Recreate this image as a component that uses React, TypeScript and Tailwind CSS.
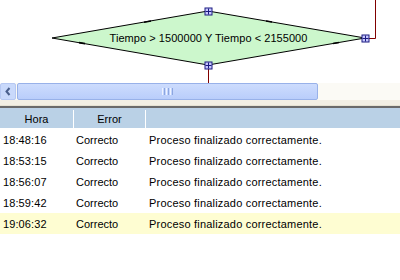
import React from "react";

const rows = [
  { hora: "18:48:16", error: "Correcto", msg: "Proceso finalizado correctamente." },
  { hora: "18:53:15", error: "Correcto", msg: "Proceso finalizado correctamente." },
  { hora: "18:56:07", error: "Correcto", msg: "Proceso finalizado correctamente." },
  { hora: "18:59:42", error: "Correcto", msg: "Proceso finalizado correctamente." },
  { hora: "19:06:32", error: "Correcto", msg: "Proceso finalizado correctamente." },
];

const Handle = ({ x, y }: { x: number; y: number }) => (
  <g>
    <rect x={x - 3.5} y={y - 3.5} width={7} height={7} fill="#c8c8ff" stroke="#1a1a80" strokeWidth={1} />
    <line x1={x} y1={y - 3} x2={x} y2={y + 3} stroke="#1a1a80" />
    <line x1={x - 3} y1={y} x2={x + 3} y2={y} stroke="#1a1a80" />
  </g>
);

const Diagram = () => (
  <div className="relative h-[83px] w-full bg-white">
    <svg width="400" height="83" className="absolute left-0 top-0">
      <polygon points="52,38 208,11 365,38 208,65" fill="#ccf7cc" stroke="#000" strokeWidth={1} />
      <line x1="144" y1="22.2" x2="151" y2="21" stroke="#000" strokeWidth={1.6} />
      <line x1="79" y1="42.6" x2="85" y2="43.6" stroke="#000" strokeWidth={1.6} />
      <line x1="266" y1="21" x2="272" y2="22" stroke="#000" strokeWidth={1.6} />
      <line x1="333" y1="43.5" x2="339" y2="42.5" stroke="#000" strokeWidth={1.6} />
      <polyline points="369,38.5 375.5,38.5 375.5,0" fill="none" stroke="#800000" strokeWidth={1} />
      <line x1="208.5" y1="69" x2="208.5" y2="83" stroke="#800000" strokeWidth={1} />
      <Handle x={208.5} y={11.5} />
      <Handle x={208.5} y={65.5} />
      <Handle x={365.5} y={38.5} />
    </svg>
    <div className="absolute left-0 top-[30px] w-[417px] text-center font-['Liberation_Sans',sans-serif] text-[11px] tracking-[0.05px] text-black">
      Tiempo &gt; 1500000 Y Tiempo &lt; 2155000
    </div>
  </div>
);

const Scrollbar = () => (
  <div className="flex h-[17px] w-full bg-[#fbfaf5]">
    <div className="flex w-[16px] items-center justify-center rounded-[2px] border border-[#b6c8f2] bg-[#c9d9fb]">
      <svg width="6" height="9" viewBox="0 0 6 9">
        <polyline points="4.5,1 1.5,4.5 4.5,8" fill="none" stroke="#4a5f8c" strokeWidth={2} />
      </svg>
    </div>
    <div className="ml-[1px] flex w-[301px] items-center justify-center rounded-[2px] border border-[#98b1e9] bg-gradient-to-b from-[#cddcfd] to-[#b9cdfb]">
      <div className="flex gap-[1px]">
        <div className="h-[7px] w-[1px] bg-[#eef3ff]" />
        <div className="h-[7px] w-[1px] bg-[#8ca6e0]" />
        <div className="h-[7px] w-[1px] bg-[#eef3ff]" />
        <div className="h-[7px] w-[1px] bg-[#8ca6e0]" />
        <div className="h-[7px] w-[1px] bg-[#eef3ff]" />
        <div className="h-[7px] w-[1px] bg-[#8ca6e0]" />
      </div>
    </div>
  </div>
);

const App = () => {
  return (
    <div className="h-[280px] w-[400px] overflow-hidden bg-white font-['Liberation_Sans',sans-serif] text-[11px] text-black">
      <Diagram />
      <Scrollbar />
      <div className="h-[6px] border-b border-[#e6e2d2] bg-[#f2efe4]" />
      <div className="h-[2px] bg-[#6a6a6a]" />
      <div className="flex h-[20px] items-center bg-[#bad1e6] pt-[2px]">
        <div className="w-[73px] text-center">Hora</div>
        <div className="h-full w-[1px] bg-white" />
        <div className="w-[71px] text-center">Error</div>
        <div className="h-full w-[1px] bg-white" />
      </div>
      <div className="mt-[1px]">
        {rows.map((r, i) => (
          <div
            key={r.hora}
            className={`flex h-[21px] items-center pt-[2px] ${i === rows.length - 1 ? "bg-[#fefdd2]" : ""}`}
          >
            <div className="w-[76px] pl-[3px] tracking-[0.1px]">{r.hora}</div>
            <div className="w-[73px]">{r.error}</div>
            <div className="tracking-[0.2px]">{r.msg}</div>
          </div>
        ))}
      </div>
    </div>
  );
};

export default App;
